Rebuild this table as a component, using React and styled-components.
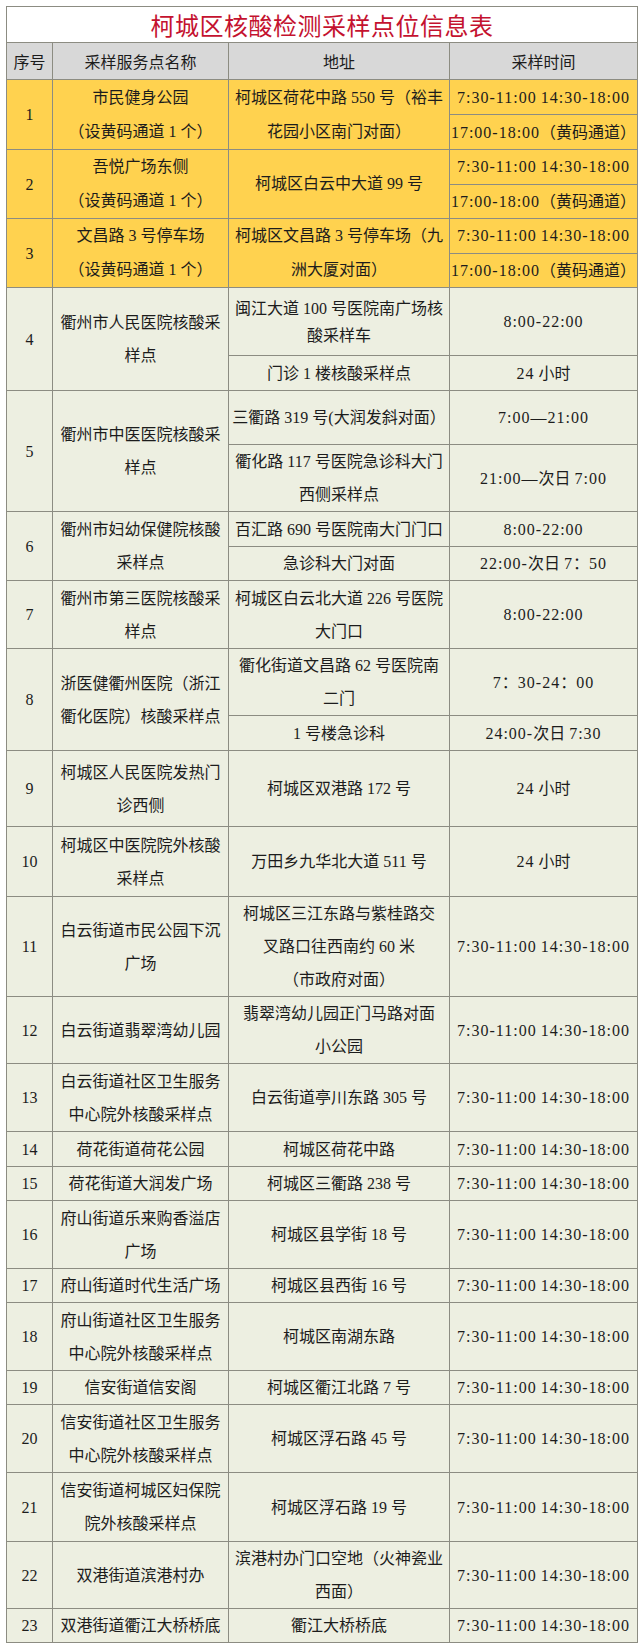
import React from "react"
import styled, { createGlobalStyle } from "styled-components"

const GlobalStyle = createGlobalStyle`
  body {
    margin: 0;
    background: #ffffff;
  }
`

const tones = {
  head: "#d8d8d8",
  yellow: "#ffd24f",
  green: "#edefe1",
}

const Page = styled.div`
  padding: 6px 0 10px 6px;
  font-family: "Liberation Serif", "Noto Sans CJK SC", serif;
  color: #1c1c1c;
`

const Table = styled.table`
  width: 631px;
  table-layout: fixed;
  border-collapse: collapse;
  font-size: 16px;
`

const Col = styled.col`
  width: ${p => p.$w}px;
`

const Row = styled.tr`
  height: ${p => p.$h}px;
  background: ${p => tones[p.$tone] || "#ffffff"};
`

const Title = styled.th`
  border: 1px solid #8c8c82;
  color: #c4122f;
  font-size: 24px;
  font-weight: 400;
  letter-spacing: 0.5px;
  text-align: center;
  padding: 0;
`

const Head = styled.th`
  border: 1px solid #8c8c82;
  font-weight: 400;
  text-align: center;
  padding: 0;
`

const Cell = styled.td`
  border: 1px solid #8c8c82;
  text-align: center;
  vertical-align: middle;
  padding: 0;
  line-height: ${p => p.$lh || 33}px;
  white-space: nowrap;
`

const Digits = styled.span`
  letter-spacing: 1px;
`

const FULL = "7:30-11:00 14:30-18:00"
const YELLOW = "17:00-18:00（黄码通道）"

const groups = [
  { no: 1, tone: "yellow", name: ["市民健身公园", "（设黄码通道 1 个）"], addr: ["柯城区荷花中路 550 号（裕丰", "花园小区南门对面）"], times: [FULL, YELLOW], heights: [35, 35] },
  { no: 2, tone: "yellow", name: ["吾悦广场东侧", "（设黄码通道 1 个）"], addr: ["柯城区白云中大道 99 号"], times: [FULL, YELLOW], heights: [34, 34] },
  { no: 3, tone: "yellow", name: ["文昌路 3 号停车场", "（设黄码通道 1 个）"], addr: ["柯城区文昌路 3 号停车场（九", "洲大厦对面）"], times: [FULL, YELLOW], heights: [34, 34] },
  {
    no: 4, name: ["衢州市人民医院核酸采", "样点"], heights: [68, 35],
    subs: [
      { addr: ["闽江大道 100 号医院南广场核", "酸采样车"], time: "8:00-22:00", lh: 27 },
      { addr: ["门诊 1 楼核酸采样点"], time: "24 小时" },
    ],
  },
  {
    no: 5, name: ["衢州市中医医院核酸采", "样点"], heights: [54, 67],
    subs: [
      { addr: ["三衢路 319 号(大润发斜对面）"], time: "7:00—21:00" },
      { addr: ["衢化路 117 号医院急诊科大门", "西侧采样点"], time: "21:00—次日 7:00" },
    ],
  },
  {
    no: 6, name: ["衢州市妇幼保健院核酸", "采样点"], heights: [35, 34],
    subs: [
      { addr: ["百汇路 690 号医院南大门门口"], time: "8:00-22:00" },
      { addr: ["急诊科大门对面"], time: "22:00-次日 7：50" },
    ],
  },
  { no: 7, name: ["衢州市第三医院核酸采", "样点"], addr: ["柯城区白云北大道 226 号医院", "大门口"], times: ["8:00-22:00"], heights: [68] },
  {
    no: 8, name: ["浙医健衢州医院（浙江", "衢化医院）核酸采样点"], heights: [67, 35],
    subs: [
      { addr: ["衢化街道文昌路 62 号医院南", "二门"], time: "7：30-24：00" },
      { addr: ["1 号楼急诊科"], time: "24:00-次日 7:30" },
    ],
  },
  { no: 9, name: ["柯城区人民医院发热门", "诊西侧"], addr: ["柯城区双港路 172 号"], times: ["24 小时"], heights: [76] },
  { no: 10, name: ["柯城区中医院院外核酸", "采样点"], addr: ["万田乡九华北大道 511 号"], times: ["24 小时"], heights: [70] },
  { no: 11, name: ["白云街道市民公园下沉", "广场"], addr: ["柯城区三江东路与紫桂路交", "叉路口往西南约 60 米", "（市政府对面）"], times: [FULL], heights: [100] },
  { no: 12, name: ["白云街道翡翠湾幼儿园"], addr: ["翡翠湾幼儿园正门马路对面", "小公园"], times: [FULL], heights: [67] },
  { no: 13, name: ["白云街道社区卫生服务", "中心院外核酸采样点"], addr: ["白云街道亭川东路 305 号"], times: [FULL], heights: [68] },
  { no: 14, name: ["荷花街道荷花公园"], addr: ["柯城区荷花中路"], times: [FULL], heights: [35] },
  { no: 15, name: ["荷花街道大润发广场"], addr: ["柯城区三衢路 238 号"], times: [FULL], heights: [34] },
  { no: 16, name: ["府山街道乐来购香溢店", "广场"], addr: ["柯城区县学街 18 号"], times: [FULL], heights: [68] },
  { no: 17, name: ["府山街道时代生活广场"], addr: ["柯城区县西街 16 号"], times: [FULL], heights: [34] },
  { no: 18, name: ["府山街道社区卫生服务", "中心院外核酸采样点"], addr: ["柯城区南湖东路"], times: [FULL], heights: [68] },
  { no: 19, name: ["信安街道信安阁"], addr: ["柯城区衢江北路 7 号"], times: [FULL], heights: [33] },
  { no: 20, name: ["信安街道社区卫生服务", "中心院外核酸采样点"], addr: ["柯城区浮石路 45 号"], times: [FULL], heights: [68] },
  { no: 21, name: ["信安街道柯城区妇保院", "院外核酸采样点"], addr: ["柯城区浮石路 19 号"], times: [FULL], heights: [69] },
  { no: 22, name: ["双港街道滨港村办"], addr: ["滨港村办门口空地（火神瓷业", "西面）"], times: [FULL], heights: [66] },
  { no: 23, name: ["双港街道衢江大桥桥底"], addr: ["衢江大桥桥底"], times: [FULL], heights: [34] },
]

// half-width runs get a little extra tracking, like the original's SimSun digits
const spaced = text =>
  text.split(/([0-9:\-—]+)/).map((part, i) =>
    /[0-9]/.test(part) ? <Digits key={i}>{part}</Digits> : part
  )

const Lines = ({ lines }) =>
  lines.map((line, i) => (
    <React.Fragment key={i}>
      {i > 0 && <br />}
      {line}
    </React.Fragment>
  ))

function Group({ g }) {
  const span = g.heights.length
  const tone = g.tone || "green"
  return g.heights.map((h, i) => {
    const sub = g.subs && g.subs[i]
    return (
      <Row key={i} $h={h} $tone={tone}>
        {i === 0 && <Cell rowSpan={span}>{g.no}</Cell>}
        {i === 0 && (
          <Cell rowSpan={span} $lh={g.tone ? 34 : 33}>
            <Lines lines={g.name} />
          </Cell>
        )}
        {sub ? (
          <Cell $lh={sub.lh}>
            <Lines lines={sub.addr} />
          </Cell>
        ) : (
          i === 0 && (
            <Cell rowSpan={span} $lh={g.tone ? 34 : 33}>
              <Lines lines={g.addr} />
            </Cell>
          )
        )}
        <Cell>{spaced(sub ? sub.time : g.times[i])}</Cell>
      </Row>
    )
  })
}

export default function App() {
  return (
    <Page>
      <GlobalStyle />
      <Table>
        <colgroup>
          <Col $w={46} />
          <Col $w={176} />
          <Col $w={221} />
          <Col $w={188} />
        </colgroup>
        <thead>
          <Row $h={35}>
            <Title colSpan={4}>柯城区核酸检测采样点位信息表</Title>
          </Row>
          <Row $h={37} $tone="head">
            <Head>序号</Head>
            <Head>采样服务点名称</Head>
            <Head>地址</Head>
            <Head>采样时间</Head>
          </Row>
        </thead>
        <tbody>
          {groups.map(g => (
            <Group key={g.no} g={g} />
          ))}
        </tbody>
      </Table>
    </Page>
  )
}
